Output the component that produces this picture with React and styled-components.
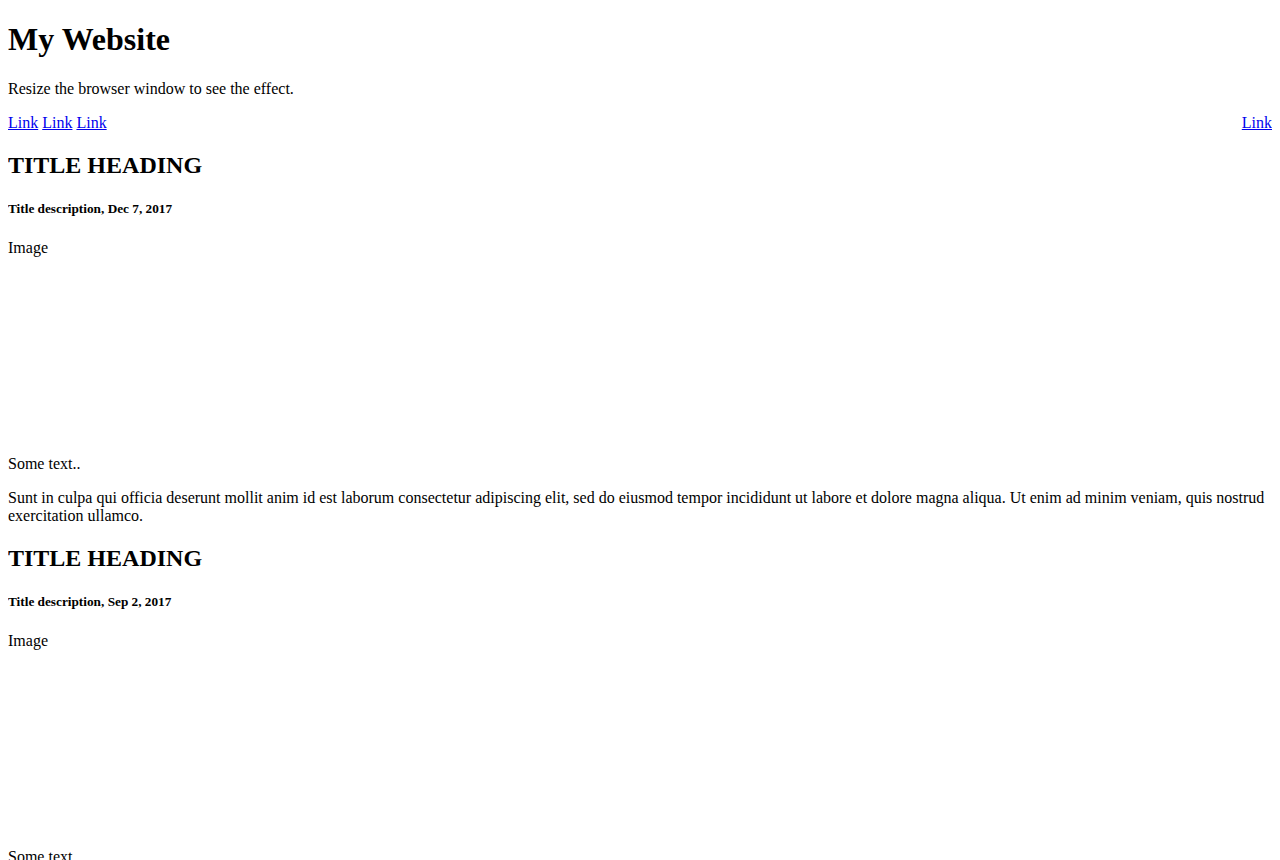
import React from "react";
import styled, { createGlobalStyle } from "styled-components";

const GlobalStyle = createGlobalStyle`
  body {
    margin: 0 8px 8px;
    font-family: "Liberation Serif", "Times New Roman", serif;
    font-size: 16px;
    color: #000;
    background: #fff;
  }
`;

const posts = [
  { date: "Dec 7, 2017" },
  { date: "Sep 2, 2017" },
];

function App() {
  return (
    <>
      <GlobalStyle />
      <Header>
        <SiteTitle>My Website</SiteTitle>
        <Text>Resize the browser window to see the effect.</Text>
      </Header>

      <TopNav>
        <span>
          <NavLink href="#">Link</NavLink> <NavLink href="#">Link</NavLink>{" "}
          <NavLink href="#">Link</NavLink>
        </span>
        <NavLink href="#">Link</NavLink>
      </TopNav>

      <Row>
        <LeftColumn>
          {posts.map((post, i) => (
            <Card key={i}>
              <CardTitle>TITLE HEADING</CardTitle>
              <CardDesc>Title description, {post.date}</CardDesc>
              {/* 가짜 이미지 영역 */}
              <FakeImg>Image</FakeImg>
              <Text>Some text..</Text>
              <Text>
                Sunt in culpa qui officia deserunt mollit anim id est laborum
                consectetur adipiscing elit, sed do eiusmod tempor incididunt ut
                labore et dolore magna aliqua. Ut enim ad minim veniam, quis
                nostrud exercitation ullamco.
              </Text>
            </Card>
          ))}
        </LeftColumn>
      </Row>
    </>
  );
}

const Header = styled.div``;

const SiteTitle = styled.h1`
  font-size: 32px;
  font-weight: bold;
  margin: 21.44px 0;
`;

const Text = styled.p`
  margin: 16px 0;
  font-size: 16px;
`;

const TopNav = styled.div`
  display: flex;
  justify-content: space-between;
  margin: 16px 0;
  line-height: normal;
`;

const NavLink = styled.a`
  color: #0000ee;
  text-decoration: underline;
`;

const Row = styled.div``;

const LeftColumn = styled.div``;

const Card = styled.div``;

const CardTitle = styled.h2`
  font-size: 24px;
  font-weight: bold;
  margin: 19.92px 0;
`;

const CardDesc = styled.h5`
  font-size: 13.28px;
  font-weight: bold;
  margin: 22.18px 0;
`;

const FakeImg = styled.div`
  height: 200px;
`;

export default App;
